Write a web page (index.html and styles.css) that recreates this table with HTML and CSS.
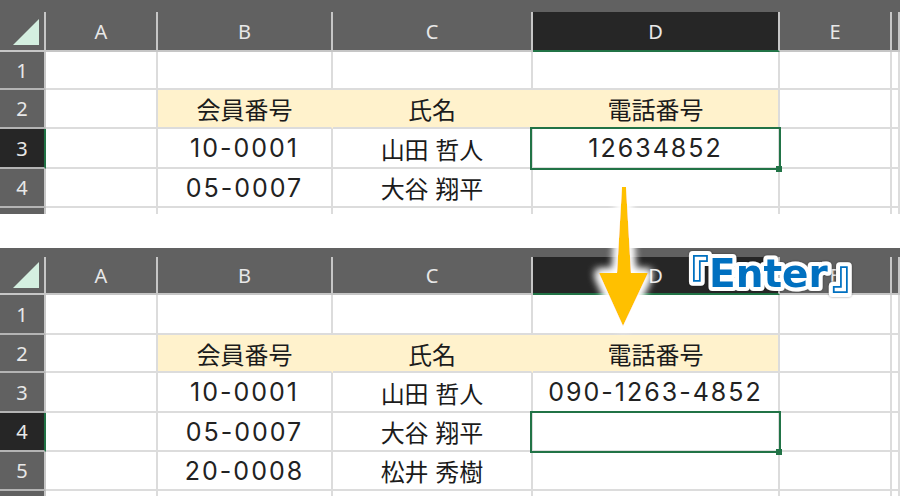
FILE: index.html
```html
<!DOCTYPE html>
<html lang="ja">
<head>
<meta charset="utf-8">
<title>Excel Enter</title>
<link rel="stylesheet" href="styles.css">
</head>
<body>
<div class="sheet">
  <div class="panel p1">
    <div class="band"></div>
    <div class="grid">
      <div class="c h corner"><span class="tri"></span></div>
      <div class="c h">A</div><div class="c h">B</div><div class="c h">C</div><div class="c h hsel">D</div><div class="c h">E</div><div class="c h"></div>

      <div class="c r">1</div><div class="c"></div><div class="c"></div><div class="c"></div><div class="c"></div><div class="c"></div><div class="c"></div>

      <div class="c r">2</div><div class="c"></div><div class="c y">会員番号</div><div class="c y">氏名</div><div class="c y yl">電話番号</div><div class="c"></div><div class="c"></div>

      <div class="c r rsel">3</div><div class="c"></div><div class="c num">10-0001</div><div class="c">山田 哲人</div><div class="c num selc">12634852</div><div class="c"></div><div class="c"></div>

      <div class="c r">4</div><div class="c"></div><div class="c num">05-0007</div><div class="c">大谷 翔平</div><div class="c"></div><div class="c"></div><div class="c"></div>

      <div class="c r"></div><div class="c"></div><div class="c"></div><div class="c"></div><div class="c"></div><div class="c"></div><div class="c"></div>
    </div>
  </div>

  <div class="gap"></div>

  <div class="panel p2">
    <div class="band"></div>
    <div class="grid">
      <div class="c h corner"><span class="tri"></span></div>
      <div class="c h">A</div><div class="c h">B</div><div class="c h">C</div><div class="c h hsel">D</div><div class="c h">E</div><div class="c h"></div>

      <div class="c r">1</div><div class="c"></div><div class="c"></div><div class="c"></div><div class="c"></div><div class="c"></div><div class="c"></div>

      <div class="c r">2</div><div class="c"></div><div class="c y">会員番号</div><div class="c y">氏名</div><div class="c y yl">電話番号</div><div class="c"></div><div class="c"></div>

      <div class="c r">3</div><div class="c"></div><div class="c num">10-0001</div><div class="c">山田 哲人</div><div class="c num">090-1263-4852</div><div class="c"></div><div class="c"></div>

      <div class="c r rsel">4</div><div class="c"></div><div class="c num">05-0007</div><div class="c">大谷 翔平</div><div class="c selc"></div><div class="c"></div><div class="c"></div>

      <div class="c r">5</div><div class="c"></div><div class="c num">20-0008</div><div class="c">松井 秀樹</div><div class="c"></div><div class="c"></div><div class="c"></div>

      <div class="c r"></div><div class="c"></div><div class="c"></div><div class="c"></div><div class="c"></div><div class="c"></div><div class="c"></div>
    </div>
  </div>

  <svg class="overlay" width="900" height="496" viewBox="0 0 900 496" xmlns="http://www.w3.org/2000/svg">
    <defs>
      <filter id="glow" x="-100%" y="-50%" width="300%" height="200%">
        <feMorphology in="SourceAlpha" operator="dilate" radius="3" result="d"/>
        <feGaussianBlur in="d" stdDeviation="4" result="b"/>
        <feFlood flood-color="#ffffff"/>
        <feComposite in2="b" operator="in" result="g"/>
        <feMerge><feMergeNode in="g"/><feMergeNode in="g"/><feMergeNode in="SourceGraphic"/></feMerge>
      </filter>
      <filter id="sh" x="-10%" y="-30%" width="120%" height="160%">
        <feDropShadow dx="0" dy="0" stdDeviation="0.8" flood-color="#000" flood-opacity="0.45"/>
      </filter>
    </defs>
    <polygon class="arrow" filter="url(#glow)" points="622,187 626,187 631,273 648,273 623,326 599,273 617,273"/>
    <g class="label" filter="url(#sh)">
      <text x="669" y="289"><tspan class="br">『</tspan><tspan class="en" dy="-2">Enter</tspan><tspan class="br" dx="4" dy="2">』</tspan></text>
    </g>
  </svg>
</div>
</body>
</html>
```

FILE: styles.css
```css
html, body {
  margin: 0;
  padding: 0;
  background: #ffffff;
}

body {
  font-family: Inter, "Noto Sans CJK JP", sans-serif;
}

.sheet {
  position: relative;
  width: 900px;
  height: 496px;
  overflow: hidden;
  background: #ffffff;
}

.panel {
  overflow: hidden;
  background: #ffffff;
}

.p1 { height: 214px; }
.gap { height: 34px; }
.p2 { height: 248px; }

.band { background: #616161; }
.p1 .band { height: 12px; }
.p2 .band { height: 9px; }

.grid {
  display: grid;
  grid-template-columns: 46px 112px 175px 200px 247px 112px 1fr;
}

.p1 .grid { grid-template-rows: 40px 38px 39px 40px 39px 20px; }
.p2 .grid { grid-template-rows: 38px 40px 38px 40px 39px 39px 20px; }

.c {
  box-sizing: border-box;
  border-right: 2px solid #dcdcdc;
  border-bottom: 2px solid #dcdcdc;
  display: flex;
  align-items: center;
  justify-content: center;
  font-size: 24px;
  color: #1b1b1b;
  white-space: nowrap;
  background: #ffffff;
}

.num {
  font-size: 25px;
  letter-spacing: 2px;
  color: #222222;
}

.h, .r {
  background: #616161;
  color: #e8e8e8;
  font-family: "Noto Sans", sans-serif;
  font-size: 20px;
  border-right-color: #c6c6c6;
  border-bottom-color: #c6c6c6;
}

.r { border-bottom-color: #b4b4b4; }

.hsel {
  background: #262626;
  border-bottom-color: #217346;
}

.rsel {
  background: #262626;
  border-right-color: #217346;
}

.corner {
  align-items: flex-end;
  justify-content: flex-end;
  padding: 0 5px 5px 0;
}

.tri {
  width: 26px;
  height: 26px;
  background: #d4efe0;
  clip-path: polygon(100% 0, 100% 100%, 0 100%);
}

.y {
  background: #fff2cc;
  border-right-color: #fff2cc;
}

.y.yl { border-right-color: #dcdcdc; }

.selc { position: relative; }

.selc::after {
  content: "";
  position: absolute;
  left: -3px;
  right: -3px;
  top: -2px;
  bottom: -3px;
  border: 2px solid #217346;
  z-index: 2;
}

.selc::before {
  content: "";
  position: absolute;
  width: 6px;
  height: 6px;
  right: -4px;
  bottom: -5px;
  background: #217346;
  z-index: 3;
}

.overlay {
  position: absolute;
  left: 0;
  top: 0;
  pointer-events: none;
}

.arrow { fill: #ffc000; }

.label text {
  fill: #0070c0;
  stroke: #ffffff;
  stroke-width: 8px;
  stroke-linejoin: round;
  paint-order: stroke fill;
}

.en {
  font-family: "DejaVu Sans", sans-serif;
  font-weight: bold;
  font-size: 39px;
}

.br {
  font-family: "Noto Sans CJK JP", sans-serif;
  font-weight: bold;
  font-size: 40px;
}
```
